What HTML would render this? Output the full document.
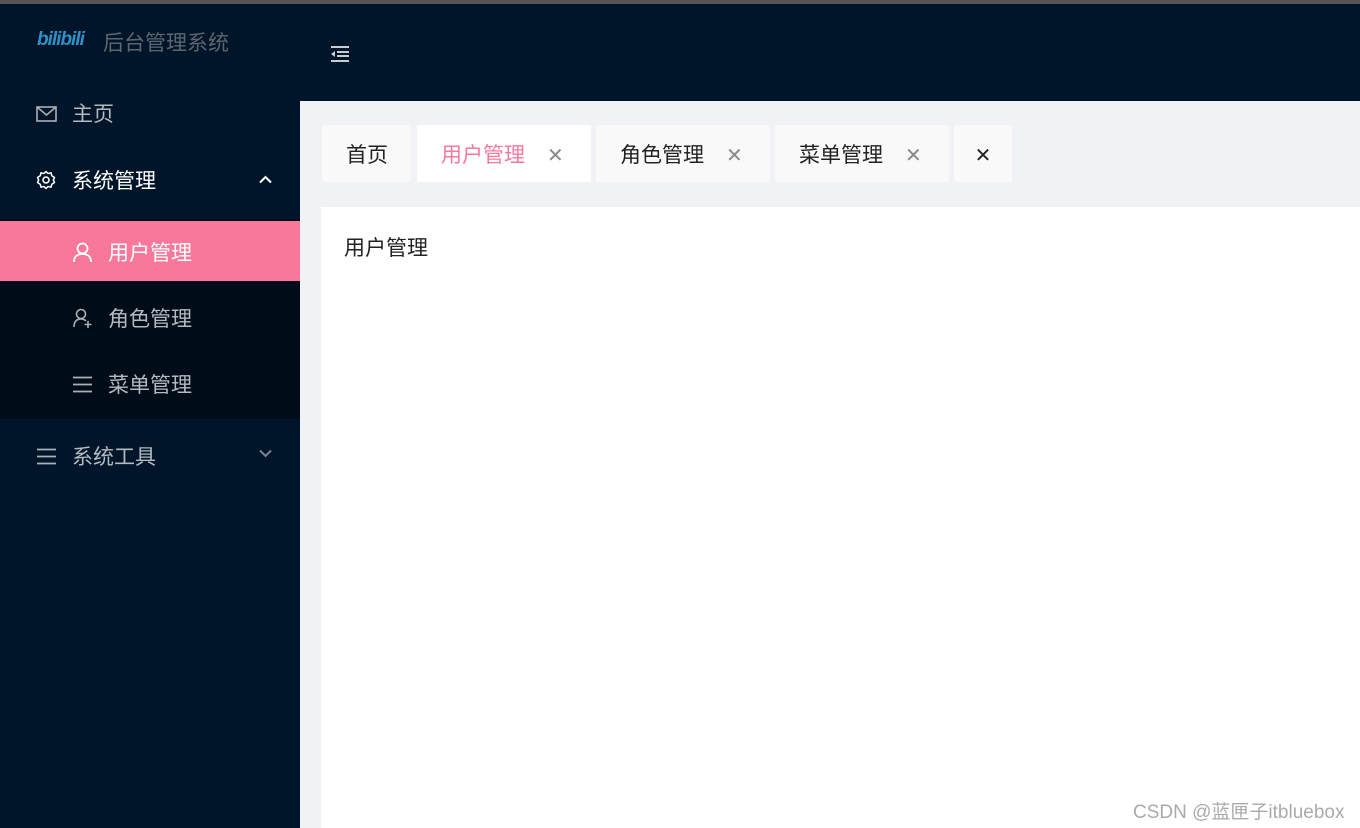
<!DOCTYPE html>
<html><head><meta charset="utf-8"><style>
*{margin:0;padding:0;box-sizing:border-box}
body{width:1360px;height:828px;overflow:hidden;background:#001529;font-family:"Liberation Sans","Noto Sans CJK SC",sans-serif;position:relative}
.topbar{position:absolute;left:0;top:0;width:1360px;height:4px;background:#555}
.abs{position:absolute}
.t{font-size:21px;white-space:nowrap}
.main{position:absolute;left:300px;top:101px;width:1060px;height:727px;background:#f0f2f5}
.tab{position:absolute;top:24px;height:57px;background:#f9f9f9;border-radius:2px;font-size:21px;color:#222;line-height:62px}
.content{position:absolute;left:21px;top:106px;width:1039px;height:621px;background:#fff}
</style></head><body>
<div class="topbar"></div>
<div class="abs t" style="left:37px;top:29px;color:#2f8fc6;font-weight:bold;font-size:19px;font-style:italic;letter-spacing:-1px">bilibili</div>
<div class="abs t" style="left:103px;top:27px;color:#5d6670;font-size:21px">后台管理系统</div>
<svg class="abs" style="left:330px;top:45px" width="19" height="18" viewBox="0 0 19 18"><g stroke="#c8cdd2" stroke-width="2"><line x1="1" y1="2" x2="19" y2="2"/><line x1="7" y1="7" x2="19" y2="7"/><line x1="7" y1="11" x2="19" y2="11"/><line x1="1" y1="16" x2="19" y2="16"/></g><path d="M5 6 L1 9 L5 12Z" fill="#c8cdd2"/></svg>

<svg class="abs" style="left:36px;top:106px" width="21" height="16" viewBox="0 0 21 16"><rect x="1" y="1" width="19" height="14" fill="none" stroke="#aab0b6" stroke-width="1.6"/><path d="M1 1 L10.5 9 L20 1" fill="none" stroke="#aab0b6" stroke-width="1.6"/></svg>
<div class="abs t" style="left:72px;top:98px;color:#b4bac0">主页</div>

<svg class="abs" style="left:36px;top:170px" width="20" height="20" viewBox="0 0 20 20"><circle cx="10" cy="10" r="3" fill="none" stroke="#fff" stroke-width="1.6"/><path d="M10 1.5 L12 3.5 L15 2.8 L15.8 5.8 L18.5 7.5 L17.3 10 L18.5 12.5 L15.8 14.2 L15 17.2 L12 16.5 L10 18.5 L8 16.5 L5 17.2 L4.2 14.2 L1.5 12.5 L2.7 10 L1.5 7.5 L4.2 5.8 L5 2.8 L8 3.5Z" fill="none" stroke="#fff" stroke-width="1.5" stroke-linejoin="round"/></svg>
<div class="abs t" style="left:72px;top:165px;color:#fff">系统管理</div>
<svg class="abs" style="left:259px;top:175px" width="13" height="9" viewBox="0 0 13 9"><path d="M1 7.5 L6.5 2 L12 7.5" fill="none" stroke="#fff" stroke-width="2"/></svg>

<div class="abs" style="left:0;top:219px;width:300px;height:200px;background:#000c17"></div>
<div class="abs" style="left:0;top:221px;width:300px;height:60px;background:#f7789b"></div>
<svg class="abs" style="left:73px;top:242px" width="19" height="21" viewBox="0 0 19 21"><circle cx="9.5" cy="6.5" r="5" fill="none" stroke="#fff" stroke-width="1.8"/><path d="M1 20 C1 14 5 12 9.5 12 C14 12 18 14 18 20" fill="none" stroke="#fff" stroke-width="1.8"/></svg>
<div class="abs t" style="left:108px;top:237px;color:#fff">用户管理</div>
<svg class="abs" style="left:73px;top:308px" width="20" height="21" viewBox="0 0 20 21"><circle cx="8" cy="6" r="4.5" fill="none" stroke="#aab0b6" stroke-width="1.6"/><path d="M1 19 C1 13 4 11 8 11 C10 11 12 12 13 13" fill="none" stroke="#aab0b6" stroke-width="1.6"/><path d="M15 13 V20 M11.5 16.5 H18.5" stroke="#aab0b6" stroke-width="1.6"/></svg>
<div class="abs t" style="left:108px;top:303px;color:#b4bac0">角色管理</div>
<svg class="abs" style="left:73px;top:376px" width="19" height="17" viewBox="0 0 19 17"><g stroke="#aab0b6" stroke-width="1.8"><line x1="0" y1="1.5" x2="19" y2="1.5"/><line x1="0" y1="8.5" x2="19" y2="8.5"/><line x1="0" y1="15.5" x2="19" y2="15.5"/></g></svg>
<div class="abs t" style="left:108px;top:369px;color:#b4bac0">菜单管理</div>

<svg class="abs" style="left:37px;top:448px" width="19" height="17" viewBox="0 0 19 17"><g stroke="#aab0b6" stroke-width="1.8"><line x1="0" y1="1.5" x2="19" y2="1.5"/><line x1="0" y1="8.5" x2="19" y2="8.5"/><line x1="0" y1="15.5" x2="19" y2="15.5"/></g></svg>
<div class="abs t" style="left:72px;top:441px;color:#b4bac0">系统工具</div>
<svg class="abs" style="left:259px;top:449px" width="13" height="9" viewBox="0 0 13 9"><path d="M1 1.5 L6.5 7 L12 1.5" fill="none" stroke="#7a8590" stroke-width="2"/></svg>

<div class="main">
 <div class="tab" style="left:22px;width:89px;padding-left:24px">首页</div>
 <div class="tab" style="left:117px;width:174px;background:#fff;padding-left:24px;color:#f7789b">用户管理<span style="position:absolute;left:130px;color:#888;font-size:20px">✕</span></div>
 <div class="tab" style="left:296px;width:174px;padding-left:24px">角色管理<span style="position:absolute;left:130px;color:#888;font-size:20px">✕</span></div>
 <div class="tab" style="left:475px;width:174px;padding-left:24px">菜单管理<span style="position:absolute;left:130px;color:#888;font-size:20px">✕</span></div>
 <div class="tab" style="left:654px;width:58px;text-align:center;font-size:20px">✕</div>
 <div class="content"><div class="t" style="position:absolute;left:23px;top:25px;color:#222">用户管理</div></div>
</div>
<div class="abs" style="left:1133px;top:797px;font-size:19px;color:#aaa;white-space:nowrap">CSDN @蓝匣子itbluebox</div>
</body></html>
